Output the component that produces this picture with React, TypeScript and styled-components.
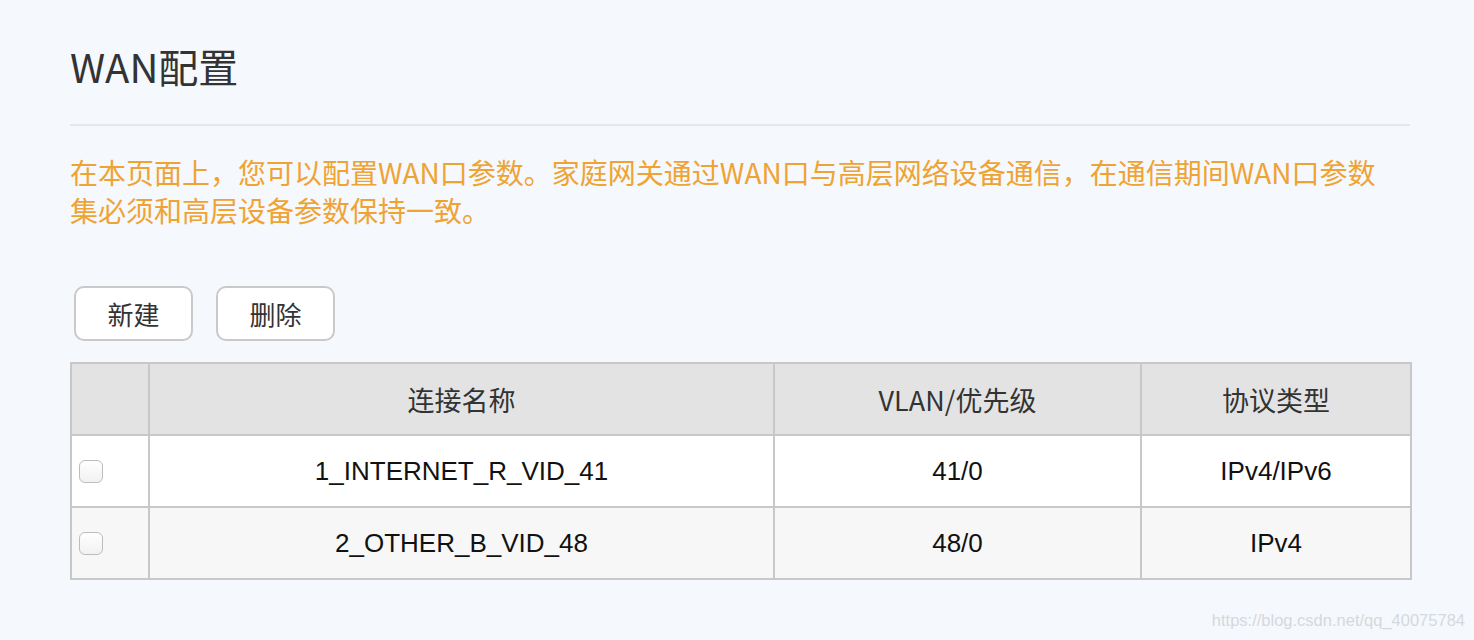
import React from 'react'
import styled, { createGlobalStyle } from 'styled-components';

const GlobalStyle = createGlobalStyle`
  html, body {
    margin: 0;
    padding: 0;
    background: #f5f8fc;
  }
  body {
    font-family: "Noto Sans CJK SC", "Noto Sans", sans-serif;
  }
`

const Page = styled.div`
  position: relative;
  width: 1474px;
  height: 640px;
  padding: 36px 64px 0 70px;
  box-sizing: border-box;
  overflow: hidden;
`

const Title = styled.h1`
  margin: 0;
  font-size: 40px;
  font-weight: 400;
  line-height: 60px;
  color: #333;
  padding-bottom: 28px;
  border-bottom: 2px solid #e6e7ea;
`

const Notice = styled.p`
  margin: 27px 0 0;
  font-size: 28px;
  line-height: 38px;
  color: #efa333;
`

const Toolbar = styled.div`
  display: flex;
  gap: 23px;
  margin: 57px 0 0 4px;
`

const Button = styled.button`
  width: 119px;
  height: 55px;
  border: 2px solid #c9c9c9;
  border-radius: 10px;
  background: #fff;
  font-family: "Noto Sans CJK SC", sans-serif;
  font-size: 26px;
  color: #333;
  padding: 0;
  cursor: pointer;
`

const Table = styled.table`
  margin-top: 21px;
  width: 1340px;
  border-collapse: collapse;
  table-layout: fixed;
  border: 2px solid #c8c8c8;
`

const Th = styled.th`
  height: 70px;
  background: #e3e3e3;
  border: 2px solid #c8c8c8;
  font-weight: 400;
  font-size: 27px;
  color: #333;
  text-align: center;
  padding: 0;
`

const Row = styled.tr<{ $alt?: boolean }>`
  background: ${p => (p.$alt ? '#f7f7f7' : '#fff')};
`

const Td = styled.td`
  height: 70px;
  border: 2px solid #c8c8c8;
  font-family: "Liberation Sans", Arial, sans-serif;
  font-size: 26px;
  color: #111;
  text-align: center;
  padding: 0;
`

const CheckCell = styled.td`
  height: 70px;
  border: 2px solid #c8c8c8;
  padding: 0 0 0 7px;
  vertical-align: middle;
`

const Check = styled.span`
  display: block;
  width: 24px;
  height: 23px;
  border: 1px solid #bdbdbd;
  border-radius: 6px;
  background: linear-gradient(#fff, #f1f1f1);
  box-sizing: border-box;
  margin-top: 1px;
`

const Watermark = styled.div`
  position: absolute;
  right: 9px;
  bottom: 10px;
  font-family: "Liberation Sans", Arial, sans-serif;
  font-size: 16.5px;
  color: #d5d8dc;
`

const rows = [
  { name: '1_INTERNET_R_VID_41', vlan: '41/0', proto: 'IPv4/IPv6' },
  { name: '2_OTHER_B_VID_48', vlan: '48/0', proto: 'IPv4' },
]

function App() {
  return (
    <Page>
      <GlobalStyle />
      <Title>WAN配置</Title>
      <Notice>
        在本页面上，您可以配置WAN口参数。家庭网关通过WAN口与高层网络设备通信，在通信期间WAN口参数<br />
        集必须和高层设备参数保持一致。
      </Notice>
      <Toolbar>
        <Button>新建</Button>
        <Button>删除</Button>
      </Toolbar>
      <Table>
        <colgroup>
          <col style={{ width: 78 }} />
          <col style={{ width: 625 }} />
          <col style={{ width: 367 }} />
          <col style={{ width: 270 }} />
        </colgroup>
        <thead>
          <tr>
            <Th></Th>
            <Th>连接名称</Th>
            <Th>VLAN/优先级</Th>
            <Th>协议类型</Th>
          </tr>
        </thead>
        <tbody>
          {rows.map((r, i) => (
            <Row key={r.name} $alt={i % 2 === 1}>
              <CheckCell><Check /></CheckCell>
              <Td>{r.name}</Td>
              <Td>{r.vlan}</Td>
              <Td>{r.proto}</Td>
            </Row>
          ))}
        </tbody>
      </Table>
      <Watermark>https://blog.csdn.net/qq_40075784</Watermark>
    </Page>
  )
}

export default App
